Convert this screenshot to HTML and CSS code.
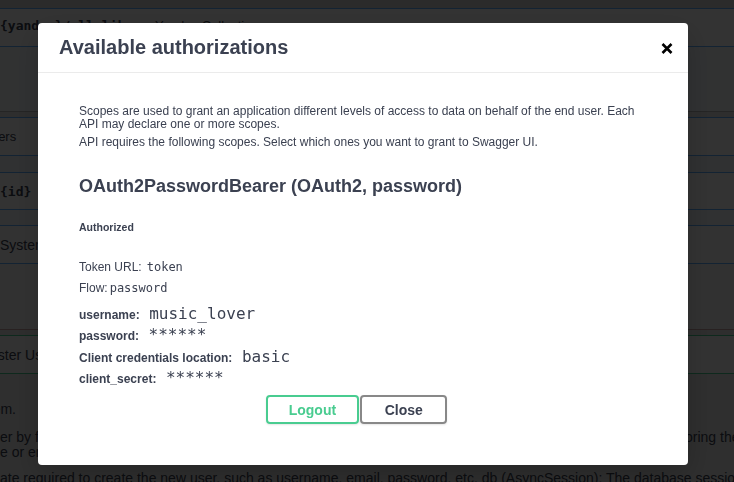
FILE: index.html
```html
<!DOCTYPE html>
<html lang="en">
<head>
<meta charset="utf-8">
<title>Available authorizations</title>
<link rel="stylesheet" href="styles.css">
</head>
<body>
<div class="page">
  <div class="band b1"></div>
  <div class="band b2"><span class="path">{yandex}/all_likes</span><span class="summary-desc">Yandex Collection</span></div>
  <div class="band b3"></div>
  <div class="band b4"></div>
  <div class="band b5"><span class="section-title cut-ers">Parameters</span></div>
  <div class="band b6"></div>
  <div class="band b7"><span class="path">{id}</span></div>
  <div class="band b8"></div>
  <div class="band b9"><span class="section-title">System</span></div>
  <div class="band b10"></div>
  <div class="band b11"></div>
  <div class="band b12"><span class="section-title cut-reg">Register User</span></div>
  <div class="band b13">
    <div class="ln ln-end"><span>Register a new user in the system.</span></div>
    <div class="ln ln-split ln-first"><span class="cell">er by first checking that no user with the same usernam</span><span class="cell">oring the</span></div>
    <div class="ln"><span>e or email already exists in the database.</span></div>
    <div class="ln ln-last"><span>ate required to create the new user, such as username, email, password, etc. db (AsyncSession): The database session</span></div>
  </div>
</div>

<div class="backdrop"></div>

<div class="dialog">
  <div class="modal">
    <div class="modal-header">
      <h3 class="modal-title">Available authorizations</h3>
      <button class="close-btn" type="button" aria-label="Close">
        <svg width="12" height="11" viewBox="0 0 12 11"><path d="M1.5 1 L10.5 10 M10.5 1 L1.5 10" stroke="#000" stroke-width="2.6" stroke-linecap="butt" fill="none"/></svg>
      </button>
    </div>
    <div class="modal-content">
      <div class="auth-container">
        <div class="scope-def">
          <p>Scopes are used to grant an application different levels of access to data on behalf of the end user. Each API may declare one or more scopes.</p>
          <p>API requires the following scopes. Select which ones you want to grant to Swagger UI.</p>
        </div>
        <h4 class="auth-title">OAuth2PasswordBearer (OAuth2, password)</h4>
        <h6 class="auth-status">Authorized</h6>
        <div class="row"><span>Token URL:</span><code class="small-code code-token">token</code></div>
        <div class="row"><span>Flow:</span><code class="small-code code-flow">password</code></div>
        <div class="field-rows">
          <div class="row field"><label>username:</label><code class="value">music_lover</code></div>
          <div class="row field"><label>password:</label><code class="value">******</code></div>
          <div class="row field"><label>Client credentials location:</label><code class="value">basic</code></div>
          <div class="row field"><label>client_secret:</label><code class="value">******</code></div>
        </div>
        <div class="btn-wrapper">
          <button class="btn btn-logout" type="button">Logout</button>
          <button class="btn btn-close" type="button">Close</button>
        </div>
      </div>
    </div>
  </div>
</div>
</body>
</html>
```
FILE: styles.css
```css
html, body {
  margin: 0;
  padding: 0;
  height: 100%;
  overflow: hidden;
}

body {
  font-family: "Liberation Sans", Arial, Helvetica, sans-serif;
  color: #3b4151;
  background: #ffffff;
}

/* ---------- underlying swagger page ---------- */
.page {
  display: flex;
  flex-direction: column;
}

.band {
  box-sizing: border-box;
  display: flex;
  align-items: center;
  white-space: nowrap;
  overflow: hidden;
  border-top: 1px solid #61affe;
  background: #ffffff;
}

.b1 { height: 8px; border-top: none; background: #d8d8d8; }
.b2 { height: 38px; background: #ffffff; padding-bottom: 5px; }
.b3 { height: 65px; background: #f3f7fb; }
.b4 { height: 6px; border-top-color: #b8b8b8; background: #e6e6e6; }
.b5 { height: 38px; background: #ffffff; }
.b6 { height: 17px; background: #eef3f8; }
.b7 { height: 37px; background: #ffffff; }
.b8 { height: 16px; background: #eef3f8; }
.b9 { height: 38px; background: #fbfbfb; }
.b10 { height: 66px; background: #f6f6f6; }
.b11 { height: 6px; border-top-color: #c9a5a5; background: #e6e6e6; }
.b12 { height: 38px; border-top-color: #49cc90; background: #fbfbfb; }
.b13 {
  flex: 1;
  min-height: 120px;
  border-top-color: #49cc90;
  background: #e9e9e9;
  flex-direction: column;
  align-items: stretch;
  padding-top: 28px;
}

.path {
  font-family: "DejaVu Sans Mono", monospace;
  font-weight: 700;
  font-size: 13px;
  color: #3b4151;
}

.summary-desc {
  margin-left: 14px;
  font-size: 13px;
  color: #3b4151;
}

.section-title {
  font-size: 14px;
  color: #3b4151;
}

.cut-ers { font-size: 13px; margin-left: -51px; }
.cut-reg { margin-left: -31px; }

.ln {
  height: 15px;
  line-height: 15px;
  font-size: 14px;
  white-space: nowrap;
  color: #3b4151;
}

.ln-end {
  width: 16px;
  display: flex;
  justify-content: flex-end;
}

.ln-first { margin-top: 13px; }

.ln-split {
  display: grid;
  grid-template-columns: 685px 1fr;
}

.cell { overflow: hidden; }

.ln-last { margin-top: 11px; }

/* ---------- backdrop + dialog ---------- */
.backdrop {
  position: fixed;
  inset: 0;
  background: rgba(0, 0, 0, 0.8);
}

.dialog {
  position: fixed;
  inset: 0;
  display: flex;
  align-items: flex-start;
  padding: 23px 0 0 38px;
}

.modal {
  width: 650px;
  background: #ffffff;
  border-radius: 4px;
  box-shadow: 0 10px 30px 0 rgba(0, 0, 0, 0.2);
}

.modal-header {
  box-sizing: border-box;
  height: 50px;
  border-bottom: 1px solid #ebebeb;
  display: flex;
  align-items: center;
  justify-content: space-between;
  padding: 0 15px 0 21px;
}

.modal-title {
  margin: 0;
  font-size: 20px;
  font-weight: 700;
  color: #3b4151;
}

.close-btn {
  border: none;
  background: none;
  padding: 0;
  width: 12px;
  height: 11px;
  display: flex;
  margin-top: 1px;
}

.modal-content {
  padding: 20px;
}

.auth-container {
  padding: 10px 20px 10px 21px;
}

.scope-def {
  padding-top: 2px;
  margin-bottom: 27px;
}

.scope-def p {
  margin: 0 0 5px;
  font-size: 12px;
  line-height: 13px;
}

.scope-def p:last-child { margin-bottom: 0; }

.auth-title {
  margin: 0 0 24px;
  font-size: 18px;
  font-weight: 700;
  color: #3b4151;
}

.auth-status {
  margin: 0 0 24px;
  font-size: 10.5px;
  line-height: 12px;
  font-weight: 700;
  color: #3b4151;
}

.row {
  height: 21px;
  line-height: 21px;
  font-size: 12px;
  white-space: nowrap;
}

.small-code {
  font-family: "DejaVu Sans Mono", monospace;
  font-size: 12px;
  line-height: 12px;
  color: #3b4151;
}

.code-token { margin-left: 5px; }
.code-flow { margin-left: 2px; }

.field-rows {
  margin-top: 6px;
}

.field {
  height: 21.3px;
}

.field label {
  font-weight: 700;
}

.value {
  font-family: "DejaVu Sans Mono", monospace;
  font-size: 16px;
  line-height: 12px;
  margin-left: 9.5px;
  color: #3b4151;
}

.btn-wrapper {
  display: flex;
  justify-content: center;
  padding: 5px 0 11px;
}

.btn {
  box-sizing: border-box;
  height: 29px;
  border: 2px solid #888888;
  border-radius: 4px;
  background: transparent;
  font-family: "Liberation Sans", Arial, sans-serif;
  font-size: 14px;
  font-weight: 700;
  box-shadow: 0 1px 2px rgba(0, 0, 0, 0.1);
}

.btn-logout {
  padding: 0 21px;
  border-color: #49cc90;
  color: #49cc90;
}

.btn-close {
  padding: 0 22.5px;
  margin-left: 1px;
  margin-right: 14px;
  color: #3b4151;
}
```
